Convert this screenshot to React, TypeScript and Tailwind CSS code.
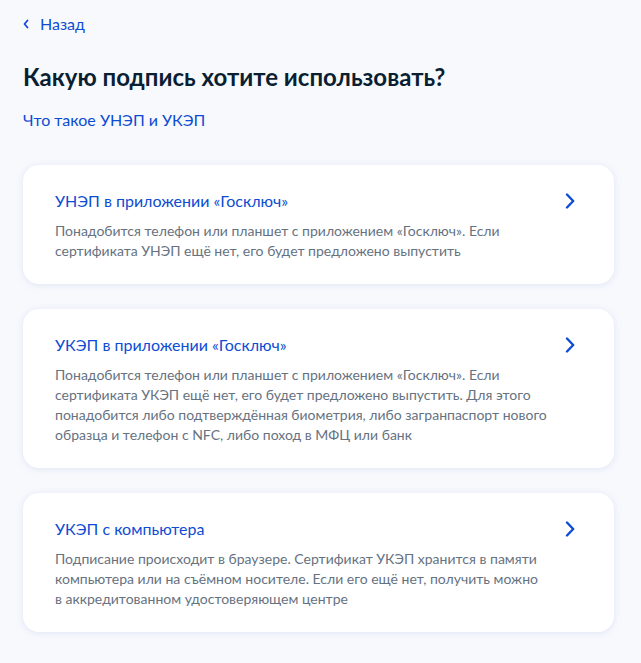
type Option = {
  title: string;
  text: string;
};

const options: Option[] = [
  {
    title: "УНЭП в приложении «Госключ»",
    text: "Понадобится телефон или планшет с приложением «Госключ». Если сертификата УНЭП ещё нет, его будет предложено выпустить",
  },
  {
    title: "УКЭП в приложении «Госключ»",
    text: "Понадобится телефон или планшет с приложением «Госключ». Если сертификата УКЭП ещё нет, его будет предложено выпустить. Для этого понадобится либо подтверждённая биометрия, либо загранпаспорт нового образца и телефон с NFC, либо поход в МФЦ или банк",
  },
  {
    title: "УКЭП с компьютера",
    text: "Подписание происходит в браузере. Сертификат УКЭП хранится в памяти компьютера или на съёмном носителе. Если его ещё нет, получить можно в аккредитованном удостоверяющем центре",
  },
];

const OptionCard = ({ title, text }: Option) => (
  <a
    href="#"
    className="flex items-start gap-[10px] rounded-2xl bg-white pl-8 pr-8 pt-6 pb-[23px] shadow-[0_1px_6px_rgba(200,212,238,0.55)]"
  >
    <div className="flex-1">
      <p className="text-base leading-6 text-[#0d4cd3]">{title}</p>
      <p className="mt-2 text-sm leading-5 text-[#66727f]">{text}</p>
    </div>
    <div className="flex h-6 w-6 items-center justify-center text-[#0d4cd3]">
      <svg width="10" height="16" viewBox="0 0 10 16" fill="none">
        <polyline
          points="2,1.5 8.2,8 2,14.5"
          stroke="currentColor"
          strokeWidth="2.4"
          strokeLinecap="round"
          strokeLinejoin="round"
        />
      </svg>
    </div>
  </a>
);

export default function App() {
  return (
    <div className="min-h-screen bg-[#f8f9fd] font-['Lato','Noto_Sans',sans-serif]">
      <div className="ml-[23px] w-[591px] pt-3 pb-8">
        <a href="#" className="flex items-center gap-[11px] text-base leading-6 text-[#0d4cd3]">
          <svg width="6" height="10" viewBox="0 0 6 10" fill="none">
            <polyline
              points="4.5,1.5 1.5,5 4.5,8.5"
              stroke="currentColor"
              strokeWidth="1.8"
              strokeLinecap="round"
              strokeLinejoin="round"
            />
          </svg>
          <span>Назад</span>
        </a>
        <h1 className="mt-[25px] text-2xl font-bold leading-8 text-[#0b1f33]">
          Какую подпись хотите использовать?
        </h1>
        <a href="#" className="mt-[15px] block text-base leading-6 text-[#0d4cd3]">
          Что такое УНЭП и УКЭП
        </a>
        <div className="mt-[33px] flex flex-col gap-[25px]">
          {options.map((o) => (
            <OptionCard key={o.title} title={o.title} text={o.text} />
          ))}
        </div>
      </div>
    </div>
  );
}
